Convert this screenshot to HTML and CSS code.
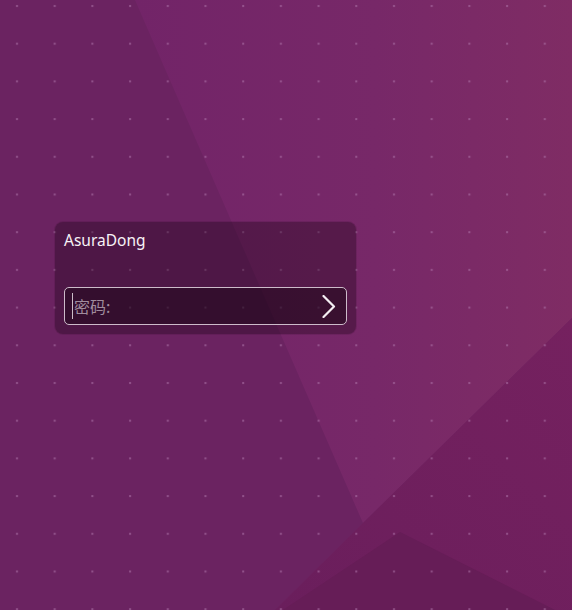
FILE: index.html
```html
<!DOCTYPE html>
<html lang="zh">
<head>
<meta charset="utf-8">
<title>Login</title>
<link rel="stylesheet" href="styles.css">
</head>
<body>
<div class="screen">
  <svg class="wallpaper" width="572" height="610" viewBox="0 0 572 610" xmlns="http://www.w3.org/2000/svg">
    <defs>
      <linearGradient id="g2" x1="0" y1="0" x2="1" y2="0">
        <stop offset="0" stop-color="#722468"/>
        <stop offset="0.55" stop-color="#772868"/>
        <stop offset="1" stop-color="#7f2c64"/>
      </linearGradient>
      <linearGradient id="g3" x1="0" y1="1" x2="1" y2="0">
        <stop offset="0" stop-color="#6a1e5c"/>
        <stop offset="1" stop-color="#75215f"/>
      </linearGradient>
      <pattern id="dots" patternUnits="userSpaceOnUse" width="37.7" height="37.7">
        <rect x="16" y="5" width="2" height="2" fill="#b078ad" fill-opacity="0.55"/>
      </pattern>
    </defs>
    <rect width="572" height="610" fill="#6b2361"/>
    <polygon points="135,0 572,0 572,318 363,523" fill="url(#g2)"/>
    <polygon points="572,318 572,610 275,610 363,523" fill="url(#g3)"/>
    <polygon points="283,610 400,532 555,610" fill="#661d57"/>
    <rect width="572" height="610" fill="url(#dots)"/>
  </svg>
  <div class="content">
    <div class="login-box">
      <div class="user-name">AsuraDong</div>
      <div class="password-field">
        <span class="cursor"></span>
        <span class="placeholder">密码:</span>
        <svg class="go-arrow" width="14" height="23" viewBox="0 0 14 23">
          <polyline points="1.5,1 12,11.5 1.5,22" fill="none" stroke="#f4eef3" stroke-width="2.2" stroke-linecap="round" stroke-linejoin="round"/>
        </svg>
      </div>
    </div>
  </div>
</div>
</body>
</html>
```

FILE: styles.css
```css
html, body {
  margin: 0;
  padding: 0;
  background: #6b2361;
}

.screen {
  display: grid;
  width: 572px;
  height: 610px;
  overflow: hidden;
}

.wallpaper {
  grid-area: 1 / 1;
  display: block;
}

.content {
  grid-area: 1 / 1;
  padding: 222px 0 0 55px;
}

.login-box {
  box-sizing: border-box;
  width: 301px;
  height: 112px;
  padding: 8px 9px 9px 9px;
  border-radius: 8px;
  background: rgba(20, 0, 15, 0.33);
  box-shadow: 0 0 0 1px rgba(30, 0, 25, 0.12);
  display: flex;
  flex-direction: column;
}

.user-name {
  font-family: "Noto Sans", "Open Sans", sans-serif;
  font-size: 15.5px;
  line-height: 20px;
  color: #f7f2f6;
}

.password-field {
  box-sizing: border-box;
  margin-top: auto;
  width: 283px;
  height: 38px;
  border: 1px solid #cdbbca;
  border-radius: 5px;
  background: rgba(10, 0, 8, 0.38);
  display: flex;
  align-items: center;
  padding: 0 10px 0 7px;
}

.cursor {
  width: 1px;
  height: 26px;
  background: #cbbdc8;
}

.placeholder {
  margin-left: 1px;
  font-family: "Noto Sans CJK SC", "Noto Sans", sans-serif;
  font-size: 16px;
  line-height: 20px;
  color: #a08c9d;
}

.go-arrow {
  margin-left: auto;
  display: block;
}
```
